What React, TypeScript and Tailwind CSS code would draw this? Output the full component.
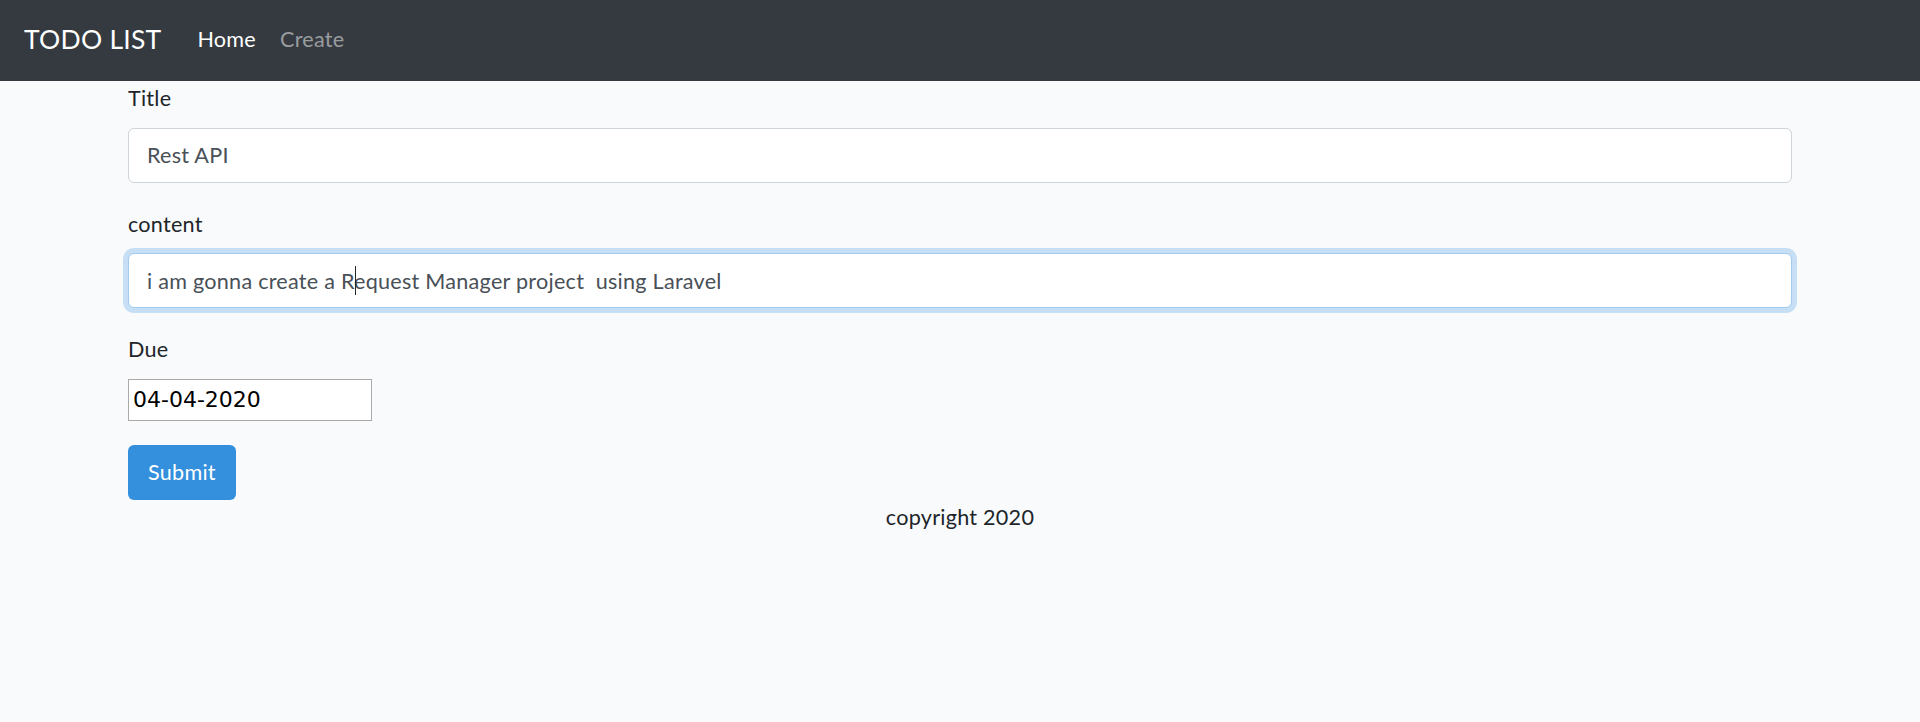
import React from "react";

function Navbar() {
  return (
    <nav className="h-[81px] bg-[#343a40] flex items-center px-6 pb-[2px]">
      <a className="text-[26.5px] leading-none text-white mr-6">TODO LIST</a>
      <div className="flex items-center">
        <a className="px-3 text-[21.6px] text-white">Home</a>
        <a className="px-3 text-[21.6px] text-white/50">Create</a>
      </div>
    </nav>
  );
}

function Field({
  label,
  value,
  focused,
  caretAfter,
}: {
  label: string;
  value: string;
  focused?: boolean;
  caretAfter?: string;
}) {
  return (
    <div className="mb-6">
      <label className="block mb-3 leading-[34.5px]">{label}</label>
      <div className="relative">
        <input
          readOnly
          value={value}
          className={
            "block w-full h-[55px] px-[18px] rounded-[6px] bg-white text-[#495057] outline-none border-[1.5px] " +
            (focused
              ? "border-[#a1cbef] shadow-[0_0_0_5px_rgba(52,144,220,0.25)]"
              : "border-[#ced4da]")
          }
        />
        {caretAfter && (
          <div className="absolute inset-0 flex items-center px-[19.5px] pointer-events-none whitespace-pre">
            <span className="text-transparent">{caretAfter}</span>
            <span className="inline-block w-px h-[29px] bg-[#212529]" />
          </div>
        )}
      </div>
    </div>
  );
}

export default function App() {
  return (
    <div className="min-h-[722px] bg-[#f8fafc] text-[#212529] text-[21.6px] tracking-[0.25px] font-['Lato',sans-serif]">
      <Navbar />
      <div className="mx-[128px]">
        <form>
          <Field label="Title" value="Rest API" />
          <Field
            label="content"
            value="i am gonna create a Request Manager project  using Laravel"
            focused
            caretAfter="i am gonna create a R"
          />
          <div className="mb-6">
            <label className="block mb-3 leading-[34.5px]">Due</label>
            <input
              readOnly
              value="04-04-2020"
              className="block w-[244px] h-[42px] px-1 bg-white border border-[#a9a9a9] text-black text-[22px] tracking-normal font-['DejaVu_Sans',sans-serif] outline-none"
            />
          </div>
          <button
            type="button"
            className="h-[55px] px-5 rounded-[6px] bg-[#3490dc] text-white"
          >
            Submit
          </button>
        </form>
        <footer className="text-center leading-[34.5px]">copyright 2020</footer>
      </div>
    </div>
  );
}
